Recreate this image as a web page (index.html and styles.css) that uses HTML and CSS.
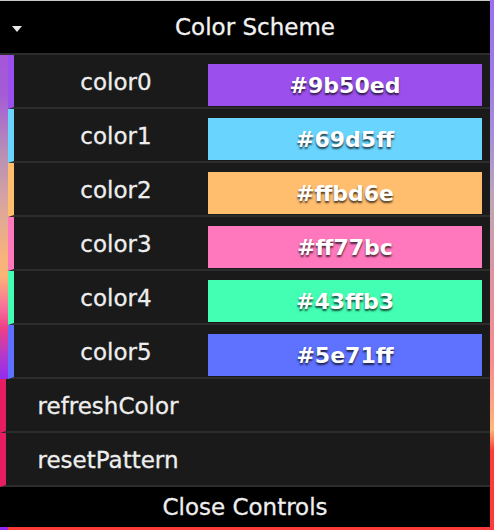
FILE: index.html
```html
<!DOCTYPE html>
<html>
<head>
<meta charset="utf-8">
<link rel="stylesheet" href="styles.css">
</head>
<body>
<div class="gui">
  <div class="title"><span class="caret"></span><span class="title-text">Color Scheme</span></div>
  <ul class="folder">
    <li class="row color c0"><span class="label">color0</span><span class="swatch">#9b50ed</span></li>
    <li class="row color c1"><span class="label">color1</span><span class="swatch">#69d5ff</span></li>
    <li class="row color c2"><span class="label">color2</span><span class="swatch">#ffbd6e</span></li>
    <li class="row color c3"><span class="label">color3</span><span class="swatch">#ff77bc</span></li>
    <li class="row color c4"><span class="label">color4</span><span class="swatch">#43ffb3</span></li>
    <li class="row color c5"><span class="label">color5</span><span class="swatch">#5e71ff</span></li>
  </ul>
  <ul class="root">
    <li class="row func"><span class="label">refreshColor</span></li>
    <li class="row func"><span class="label">resetPattern</span></li>
  </ul>
  <div class="close">Close Controls</div>
</div>
</body>
</html>
```
FILE: styles.css
```css
html, body {
  margin: 0;
  padding: 0;
  height: 100%;
  overflow: hidden;
}
body {
  font-family: "DejaVu Sans", sans-serif;
  background:
    linear-gradient(#c8c8c8, #c8c8c8) left top / 490px 1px no-repeat,
    linear-gradient(to bottom, #9a6ff0 0%, #9d7cea 15%, #a692d6 27%, #bea6b6 38%, #dc94a0 52%, #f98c8e 68%, #ffa882 78%, #ffb878 81%, #ff3a3a 85%, #ff3a3a 100%) right top / 4px 100% no-repeat,
    linear-gradient(to bottom, #a14fdd 0%, #a55cd6 18%, #b48cb8 28%, #d8a4a0 38%, #f6b37c 48%, #fab476 52%, #f7709a 58%, #ee3f86 62%, #b23acb 67%, #8f2af2 72%, #8f2af2 100%) left top / 8px 100% no-repeat,
    #ff3a3a;
}
.gui {
  width: 490px;
  margin-top: 1px;
  color: #eee;
  font-size: 23px;
  -webkit-text-stroke: 0.3px currentColor;
}
.title {
  display: flex;
  align-items: center;
  height: 52px;
  background: #000;
  border-bottom: 2px solid #2c2c2c;
  color: #f2f2f2;
}
.caret {
  flex: 0 0 auto;
  width: 0;
  height: 0;
  margin: 4px 0 0 12px;
  border-top: 6px solid #e8e8e8;
  border-left: 5px solid transparent;
  border-right: 5px solid transparent;
}
.title-text {
  flex: 1;
  text-align: center;
  padding-right: 2px;
}
ul {
  list-style: none;
  margin: 0;
  padding: 0;
}
.folder {
  margin-left: 8px;
}
.row {
  display: flex;
  height: 52px;
  background: #1a1a1a;
  border-bottom: 2px solid #2c2c2c;
  border-left: 6px solid #e61d5f;
}
.label {
  flex: 0 0 184px;
  padding-left: 10px;
  text-align: center;
  line-height: 54px;
  white-space: nowrap;
}
.swatch {
  flex: 1;
  margin: 9px 8px 1px 0;
  display: flex;
  align-items: center;
  justify-content: center;
  font-weight: bold;
  font-size: 22px;
  color: #fff;
  -webkit-text-stroke: 0;
  text-shadow: 0 2px 2px rgba(0, 0, 0, 0.7);
}
.c0 { border-left-color: #9b50ed; }
.c0 .swatch { background: #9b50ed; }
.c1 { border-left-color: #69d5ff; }
.c1 .swatch { background: #69d5ff; }
.c2 { border-left-color: #ffbd6e; }
.c2 .swatch { background: #ffbd6e; }
.c3 { border-left-color: #ff77bc; }
.c3 .swatch { background: #ff77bc; }
.c4 { border-left-color: #43ffb3; }
.c4 .swatch { background: #43ffb3; }
.c5 { border-left-color: #5e71ff; }
.c5 .swatch { background: #5e71ff; }
.close {
  height: 40px;
  line-height: 40px;
  background: #000;
  text-align: center;
  color: #eee;
}
```
